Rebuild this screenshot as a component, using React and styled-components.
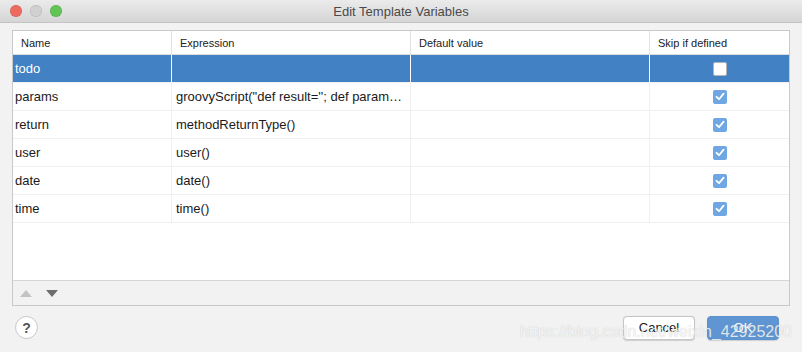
import React from 'react'
import styled, { createGlobalStyle } from 'styled-components'

const Global = createGlobalStyle`
  html, body { margin: 0; padding: 0; }
  body { font-family: "Liberation Sans", Arial, sans-serif; background: #f2f2f2; }
`

const Window = styled.div`
  position: relative;
  width: 802px;
  height: 352px;
  background: #f2f2f2;
  display: flex;
  flex-direction: column;
  overflow: hidden;
`

const TitleBar = styled.div`
  height: 22px;
  background: linear-gradient(#ebebeb, #d5d5d5);
  border-bottom: 1px solid #c4c4c4;
  display: flex;
  align-items: center;
  position: relative;
  flex-shrink: 0;
`

const Lights = styled.div`
  display: flex;
  gap: 8px;
  padding-left: 10px;
`

const Light = styled.span`
  width: 12px;
  height: 12px;
  border-radius: 50%;
  background: ${p => p.c};
  box-shadow: inset 0 0 0 0.5px rgba(0,0,0,0.15);
`

const Title = styled.div`
  position: absolute;
  left: 0;
  right: 0;
  text-align: center;
  font-size: 13px;
  color: #4a4a4a;
  pointer-events: none;
`

const Body = styled.div`
  flex: 1;
  padding: 7px 12px 0 12px;
  display: flex;
  flex-direction: column;
`

const Panel = styled.div`
  height: 274px;
  border: 1px solid #c9c9c9;
  background: #fff;
  display: flex;
  flex-direction: column;
`

const Grid = styled.div`
  flex: 1;
  display: grid;
  grid-template-columns: 158px 239px 239px 1fr;
  grid-auto-rows: 28px;
  grid-template-rows: 24px;
  align-content: start;
`

const Head = styled.div`
  font-size: 11px;
  color: #222;
  display: flex;
  align-items: center;
  padding-left: 8px;
  border-left: ${p => (p.first ? 'none' : '1px solid #e2e2e2')};
  border-bottom: 1px solid #dcdcdc;
`

const Cell = styled.div`
  font-size: 13px;
  color: ${p => (p.sel ? '#fff' : '#1a1a1a')};
  background: ${p => (p.sel ? '#4281c3' : '#fff')};
  display: flex;
  align-items: center;
  justify-content: ${p => (p.center ? 'center' : 'flex-start')};
  padding-left: ${p => (p.center ? '0' : p.first ? '2px' : '4px')};
  border-left: ${p => (p.first ? 'none' : p.sel ? '1px solid #fff' : '1px solid #f0f0f0')};
  border-bottom: 1px solid #f0f0f0;
  white-space: nowrap;
  overflow: hidden;
`

const Box = styled.span`
  width: 14px;
  height: 14px;
  box-sizing: border-box;
  border-radius: 2px;
  background: ${p => (p.on ? '#6fa7e4' : '#fff')};
  border: ${p => (p.on ? 'none' : '1px solid #b5b5b5')};
  display: flex;
  align-items: center;
  justify-content: center;
`

const Toolbar = styled.div`
  height: 24px;
  background: #f2f2f2;
  border-top: 1px solid #d5d5d5;
  display: flex;
  align-items: center;
  gap: 14px;
  padding-left: 7px;
`

const Footer = styled.div`
  flex: 1;
  display: flex;
  align-items: center;
  padding: 0 11px 3px 3px;
`

const Help = styled.div`
  width: 21px;
  height: 21px;
  border-radius: 50%;
  background: #fff;
  border: 1px solid #c8c8c8;
  display: flex;
  align-items: center;
  justify-content: center;
  font-size: 14px;
  font-weight: bold;
  color: #555;
`

const Spacer = styled.div`
  flex: 1;
`

const Button = styled.button`
  width: 72px;
  height: 24px;
  border-radius: 4px;
  font-family: "Liberation Sans", Arial, sans-serif;
  font-size: 13px;
  margin-left: 12px;
  border: 1px solid ${p => (p.primary ? '#5b92d0' : '#c6c6c6')};
  background: ${p => (p.primary ? '#5f95d3' : '#fff')};
  color: ${p => (p.primary ? '#fff' : '#1a1a1a')};
  box-shadow: 0 0.5px 1px rgba(0,0,0,0.15);
`

const Watermark = styled.div`
  position: absolute;
  right: 10px;
  bottom: 11px;
  font-size: 16px;
  color: rgba(255,255,255,0.75);
  text-shadow: 0 0 1px rgba(150,150,150,0.5);
  pointer-events: none;
`

const rows = [
  ['todo', '', false],
  ['params', 'groovyScript("def result=\'\'; def param\u2026', true],
  ['return', 'methodReturnType()', true],
  ['user', 'user()', true],
  ['date', 'date()', true],
  ['time', 'time()', true],
]

const Check = () => (
  <svg width="10" height="9" viewBox="0 0 10 9">
    <path d="M1.5 4.8 L4 7.2 L8.6 1.6" fill="none" stroke="#fff" strokeWidth="1.8" strokeLinecap="round" strokeLinejoin="round" />
  </svg>
)

const Arrow = ({ down, color }) => (
  <svg width="12" height="7" viewBox="0 0 12 7">
    <path d={down ? 'M0 0 L12 0 L6 7 Z' : 'M0 7 L12 7 L6 0 Z'} fill={color} />
  </svg>
)

const App = () => (
  <>
    <Global />
    <Window>
      <TitleBar>
        <Lights>
          <Light c="#ed6a5e" />
          <Light c="#d0d0d0" />
          <Light c="#61c454" />
        </Lights>
        <Title>Edit Template Variables</Title>
      </TitleBar>
      <Body>
        <Panel>
          <Grid>
            <Head first>Name</Head>
            <Head>Expression</Head>
            <Head>Default value</Head>
            <Head>Skip if defined</Head>
            {rows.map(([name, expr, on], i) => {
              const sel = i === 0
              return (
                <React.Fragment key={name}>
                  <Cell first sel={sel}>{name}</Cell>
                  <Cell sel={sel}>{expr}</Cell>
                  <Cell sel={sel}></Cell>
                  <Cell sel={sel} center>
                    <Box on={on}>{on && <Check />}</Box>
                  </Cell>
                </React.Fragment>
              )
            })}
          </Grid>
          <Toolbar>
            <Arrow color="#c3c3c3" />
            <Arrow down color="#6e6e6e" />
          </Toolbar>
        </Panel>
        <Footer>
          <Help>?</Help>
          <Spacer />
          <Button>Cancel</Button>
          <Button primary>OK</Button>
        </Footer>
      </Body>
      <Watermark>https://blog.csdn.net/weixin_42925200</Watermark>
    </Window>
  </>
)

export default App
